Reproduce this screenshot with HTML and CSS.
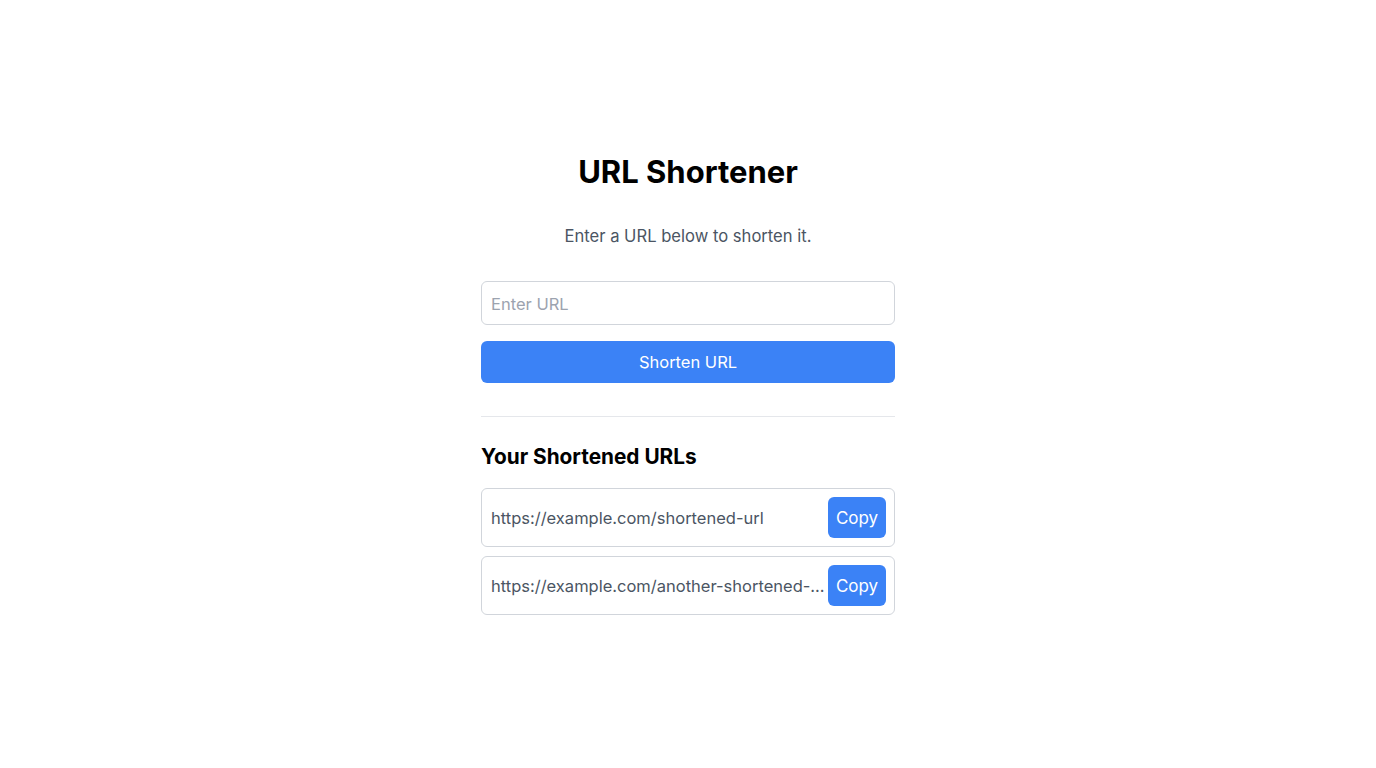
FILE: index.html
```html
<!DOCTYPE html>
<html lang="en">
<head>
<meta charset="utf-8">
<title>URL Shortener</title>
<link rel="stylesheet" href="styles.css">
</head>
<body>
<main class="page">
  <div class="card">
    <h1 class="title">URL Shortener</h1>
    <p class="subtitle">Enter a URL below to shorten it.</p>
    <input class="url-input" type="text" placeholder="Enter URL">
    <button class="primary-btn">Shorten URL</button>
    <hr class="divider">
    <h2 class="list-title">Your Shortened URLs</h2>
    <ul class="url-list">
      <li class="url-item">
        <span class="url-text">https://example.com/shortened-url</span>
        <button class="copy-btn">Copy</button>
      </li>
      <li class="url-item">
        <span class="url-text">https://example.com/another-shortened-url-example</span>
        <button class="copy-btn">Copy</button>
      </li>
    </ul>
  </div>
</main>
</body>
</html>
```
FILE: styles.css
```css
* { box-sizing: border-box; }
html, body { margin: 0; padding: 0; background: #fff; }
body { font-family: Inter, "Noto Sans", sans-serif; color: #000; }
.page {
  min-height: 100vh;
  display: flex;
  align-items: center;
  justify-content: center;
}
.card {
  width: 446px;
  padding: 0 16px;
  display: flex;
  flex-direction: column;
}
.title {
  margin: 0;
  font-size: 31px;
  line-height: 36px;
  font-weight: 700;
  text-align: center;
}
.subtitle {
  margin: 34px 0 0;
  font-size: 16.6px;
  line-height: 24px;
  color: #4b5563;
  text-align: center;
}
.url-input {
  margin-top: 33px;
  height: 44px;
  width: 100%;
  border: 1px solid #d1d5db;
  border-radius: 6px;
  padding: 2px 9px 0;
  font-family: inherit;
  font-size: 16.5px;
  color: #111827;
  outline: none;
}
.url-input::placeholder { color: #9ca3af; }
.primary-btn {
  margin-top: 16px;
  height: 42px;
  width: 100%;
  border: none;
  border-radius: 6px;
  background: #3b82f6;
  color: #fff;
  font-family: inherit;
  font-size: 16.5px;
}
.divider {
  margin: 33px 0 0;
  border: none;
  border-top: 1px solid #e5e7eb;
}
.list-title {
  margin: 26px 0 0;
  font-size: 20.8px;
  line-height: 28px;
  font-weight: 700;
}
.url-list {
  list-style: none;
  margin: 17px 0 0;
  padding: 0;
  display: flex;
  flex-direction: column;
  gap: 9px;
}
.url-item {
  display: flex;
  align-items: center;
  border: 1px solid #d1d5db;
  border-radius: 6px;
  padding: 8px;
  height: 59px;
}
.url-text {
  flex: 1;
  min-width: 0;
  white-space: nowrap;
  overflow: hidden;
  text-overflow: ellipsis;
  font-size: 16.5px;
  color: #4b5563;
  padding: 2px 0 0 1px;
}
.copy-btn {
  flex: none;
  height: 41px;
  width: 58px;
  border: none;
  border-radius: 6px;
  background: #3b82f6;
  color: #fff;
  font-family: inherit;
  font-size: 17px;
  padding: 2px 0 0;
}
```
